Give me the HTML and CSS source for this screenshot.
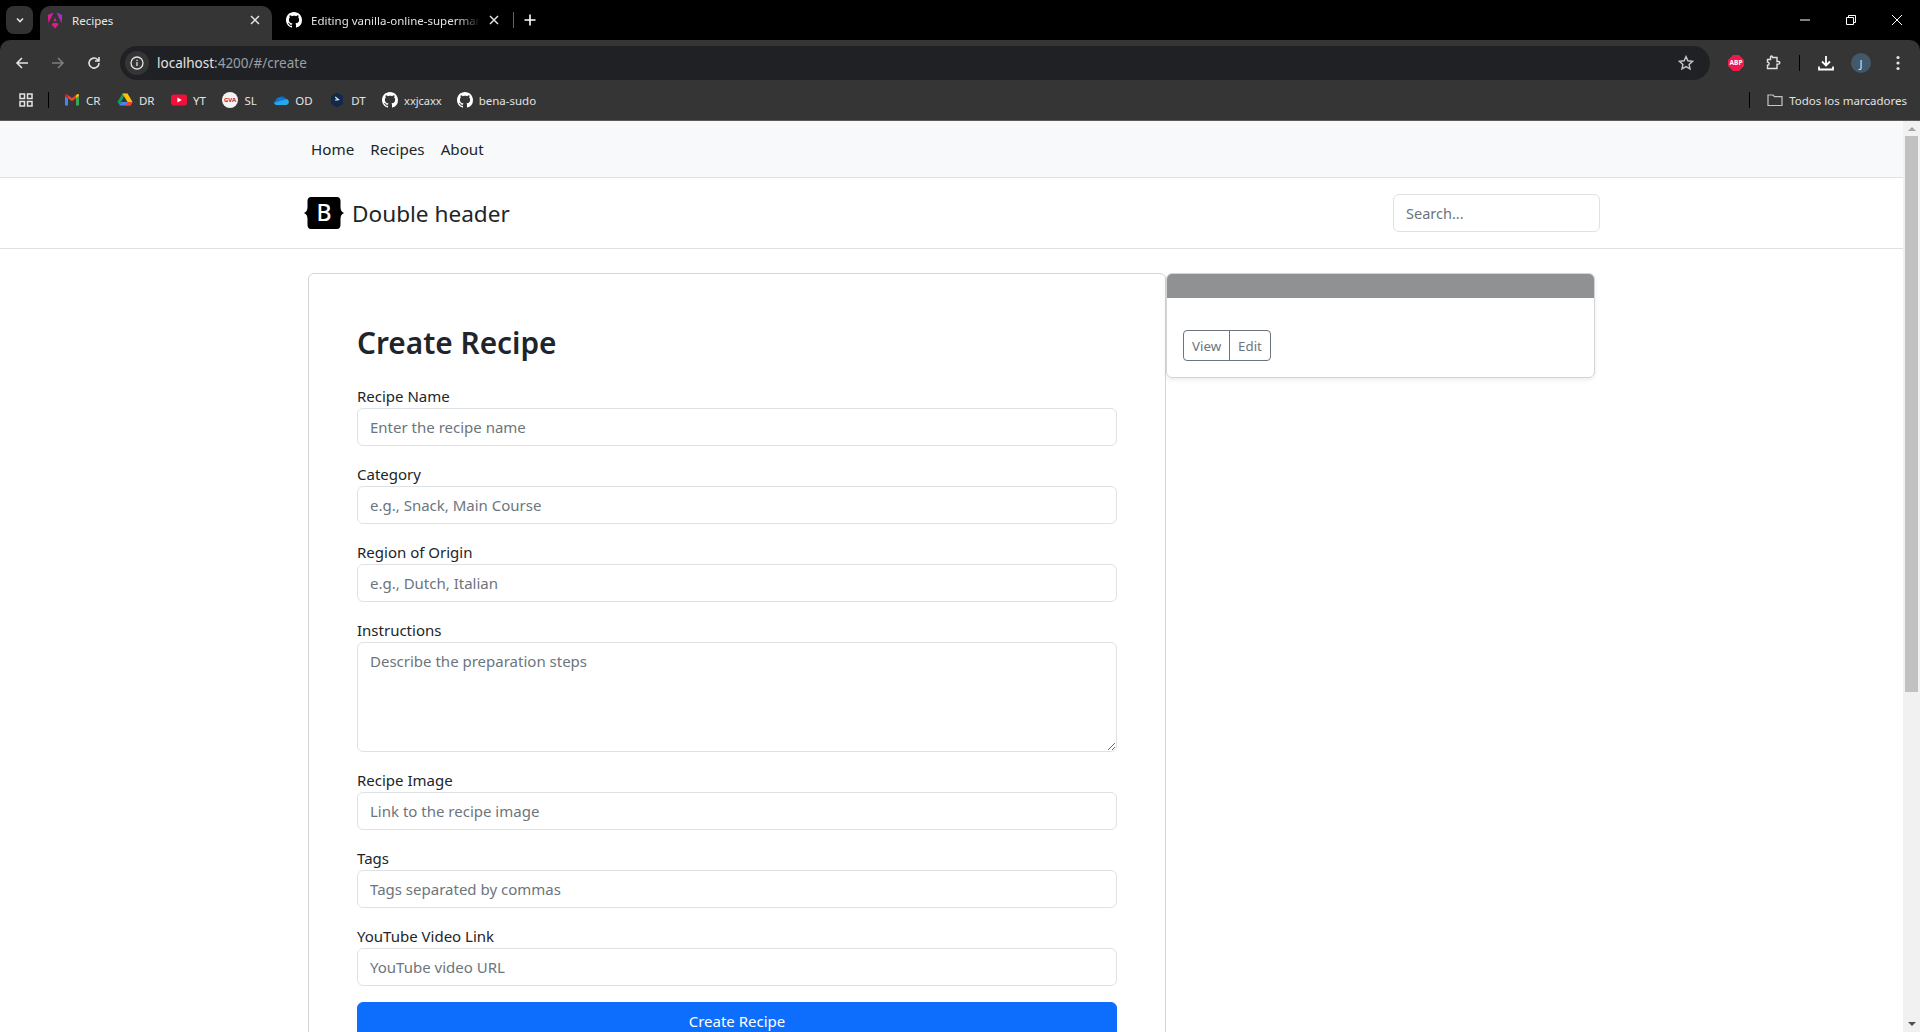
FILE: index.html
```html
<!DOCTYPE html>
<html lang="en">
<head>
    <meta charset="UTF-8">
    <meta name="viewport" content="width=device-width, initial-scale=1.0">
    <title>Recipes</title>
    <link rel="stylesheet" href="styles.css">
</head>
<body>
    <svg class="defs" width="0" height="0">
        <symbol id="gh" viewBox="0 0 16 16">
            <path fill="currentColor" d="M8 0C3.58 0 0 3.58 0 8c0 3.54 2.29 6.53 5.47 7.59.4.07.55-.17.55-.38 0-.19-.01-.82-.01-1.49-2.01.37-2.53-.49-2.69-.94-.09-.23-.48-.94-.82-1.13-.28-.15-.68-.52-.01-.53.63-.01 1.08.58 1.23.82.72 1.21 1.87.87 2.33.66.07-.52.28-.87.51-1.07-1.78-.2-3.64-.89-3.64-3.95 0-.87.31-1.59.82-2.15-.08-.2-.36-1.02.08-2.12 0 0 .67-.21 2.2.82.64-.18 1.32-.27 2-.27.68 0 1.36.09 2 .27 1.53-1.04 2.2-.82 2.2-.82.44 1.1.16 1.92.08 2.12.51.56.82 1.27.82 2.15 0 3.07-1.87 3.75-3.65 3.95.29.25.54.73.54 1.48 0 1.07-.01 1.93-.01 2.2 0 .21.15.46.55.38A8.013 8.013 0 0016 8c0-4.42-3.58-8-8-8z"/>
        </symbol>
        <symbol id="x" viewBox="0 0 10 10">
            <path d="M1 1l8 8M9 1l-8 8" stroke="currentColor" stroke-width="1.5" fill="none"/>
        </symbol>
    </svg>

    <!-- browser frame -->
    <div class="chrome">
        <div class="tabstrip">
            <div class="tab-menu">
                <svg width="10" height="10" viewBox="0 0 10 10"><path d="M2 3.5l3 3 3-3" stroke="#e3e3e3" stroke-width="1.6" fill="none"/></svg>
            </div>
            <div class="tab tab-active">
                <svg class="tab-icon" width="16" height="17" viewBox="0 0 16 17">
                    <defs>
                        <linearGradient id="ng" x1="0" y1="1" x2="1" y2="0">
                            <stop offset="0" stop-color="#f0106a"/>
                            <stop offset="0.55" stop-color="#d81fa0"/>
                            <stop offset="1" stop-color="#7b3fe0"/>
                        </linearGradient>
                    </defs>
                    <path fill="url(#ng)" d="M9.6.6l4.900 10.600L15.200 3zM6.400.6L.8 3l.7 8.200zM8 5.400l-1.600 3.800h3.200zM5.600 11l-.9 2.100L8 16.400l3.300-3.300-.9-2.100z"/>
                </svg>
                <span class="tab-title">Recipes</span>
                <svg class="tab-close" width="10" height="10"><use href="#x"/></svg>
            </div>
            <div class="tab">
                <svg class="tab-icon" width="16" height="16"><use href="#gh"/></svg>
                <span class="tab-title tab-fade">Editing vanilla-online-supermar</span>
                <svg class="tab-close" width="10" height="10"><use href="#x"/></svg>
            </div>
            <span class="tab-sep"></span>
            <svg class="new-tab" width="12" height="12" viewBox="0 0 12 12"><path d="M6 .5v11M.5 6h11" stroke="#fff" stroke-width="1.6"/></svg>
            <div class="win-controls">
                <svg width="10" height="10" viewBox="0 0 10 10"><path d="M0 5h10" stroke="#fff"/></svg>
                <svg width="10" height="10" viewBox="0 0 10 10"><path d="M.5 2.500h7v7h-7zM2.500 2.500V.5h7v7h-2" stroke="#fff" fill="none"/></svg>
                <svg width="10" height="10" viewBox="0 0 10 10"><path d="M0 0l10 10M10 0L0 10" stroke="#fff"/></svg>
            </div>
        </div>

        <div class="toolbar">
            <svg class="tool" width="14" height="14" viewBox="0 0 14 14"><path d="M13 7H2M7 2L2 7l5 5" stroke="#e3e3e3" stroke-width="1.6" fill="none"/></svg>
            <svg class="tool" width="14" height="14" viewBox="0 0 14 14"><path d="M1 7h11M7 2l5 5-5 5" stroke="#7d7d7d" stroke-width="1.6" fill="none"/></svg>
            <svg class="tool" width="14" height="14" viewBox="0 0 14 14"><path d="M12 7a5 5 0 1 1-1.500-3.500L12 5M12 1v4H8" stroke="#e3e3e3" stroke-width="1.6" fill="none"/></svg>
            <div class="omnibox">
                <span class="site-info">
                    <svg width="14" height="14" viewBox="0 0 14 14"><circle cx="7" cy="7" r="6" stroke="#e3e3e3" stroke-width="1.3" fill="none"/><path d="M7 6v4M7 3.800v1.300" stroke="#e3e3e3" stroke-width="1.3"/></svg>
                </span>
                <span class="url">localhost<span class="url-rest">:4200/#/create</span></span>
                <svg class="star" width="16" height="16" viewBox="0 0 16 16"><path d="M8 1.600l1.900 4.200 4.600.5-3.400 3.100.9 4.500-4-2.300-4 2.300.9-4.500L1.500 6.300l4.600-.5z" stroke="#c4c7c5" stroke-width="1.400" fill="none"/></svg>
            </div>
            <div class="toolbar-right">
                <svg width="16" height="16" viewBox="0 0 16 16"><path fill="#ee1a4b" d="M5 0h6l5 5v6l-5 5H5l-5-5V5z"/><text x="8" y="10.400" class="abp">ABP</text></svg>
                <svg width="16" height="16" viewBox="0 0 16 16"><path d="M1.500 5h3V2.500a1 1 0 0 1 2 0V3L11 3v4h1.500a1.300 1.300 0 0 1 0 2.600H11v4.400H1.500v-3.200a1.600 1.600 0 0 0 0-3.200z" transform="translate(1 -.5)" stroke="#e3e3e3" stroke-width="1.400" fill="none"/></svg>
                <span class="tool-sep"></span>
                <svg width="16" height="16" viewBox="0 0 16 16"><path d="M8 1v9M4 6.500L8 10.500 12 6.500M1 11.500V14.500H15V11.500" stroke="#fff" stroke-width="1.800" fill="none"/></svg>
                <span class="avatar">J</span>
                <svg width="4" height="16" viewBox="0 0 4 16"><circle cx="2" cy="2.500" r="1.600" fill="#e3e3e3"/><circle cx="2" cy="8" r="1.600" fill="#e3e3e3"/><circle cx="2" cy="13.500" r="1.600" fill="#e3e3e3"/></svg>
            </div>
        </div>

        <div class="bookmarks">
            <svg class="apps" width="14" height="14" viewBox="0 0 14 14"><path d="M1 1h4.500v4.500H1zM8.500 1H13v4.500H8.500zM1 8.500h4.500V13H1zM8.500 8.500H13V13H8.500z" stroke="#e3e3e3" stroke-width="1.500" fill="none"/></svg>
            <span class="mark-sep"></span>
            <a class="mark">
                <svg width="16" height="16" viewBox="0 0 16 16"><path fill="#4285f4" d="M1 13.500V4l3 2.300v7.200z"/><path fill="#34a853" d="M12 13.500V6.300L15 4v9.500z"/><path fill="#ea4335" d="M4 6.300V3l4 3 4-3v3.300L8 9.300z"/><path fill="#c5221f" d="M1 4l3 2.300V3L2.800 2.200C2 1.600 1 2.200 1 3.200z"/><path fill="#fbbc04" d="M15 4l-3 2.300V3l1.200-.8c.8-.6 1.800 0 1.800 1z"/></svg>
                CR
            </a>
            <a class="mark">
                <svg width="16" height="16" viewBox="0 0 16 16"><path fill="#0f9d58" d="M5.400 1.500h3.200L4 10 2.400 13 .5 10z"/><path fill="#ffc107" d="M5.400 1.500h5.200L15.500 10h-5z"/><path fill="#4285f4" d="M4 10h11.500l-1.900 3.500H2.400z"/><path fill="#ea4335" d="M10.500 10h5l-1.900 3.500H8.500z"/></svg>
                DR
            </a>
            <a class="mark">
                <svg width="16" height="16" viewBox="0 0 16 16"><rect y="2.500" width="16" height="11" rx="2.800" fill="#f0103a"/><path d="M6.400 5.500L10.800 8l-4.400 2.500z" fill="#fff"/></svg>
                YT
            </a>
            <a class="mark">
                <svg width="16" height="16" viewBox="0 0 16 16"><circle cx="8" cy="8" r="8" fill="#f2f2f2"/><text x="8" y="10" class="gva">GVA</text></svg>
                SL
            </a>
            <a class="mark">
                <svg width="16" height="16" viewBox="0 0 16 16"><path fill="#0364b8" d="M6.500 5.200a4.300 4.300 0 0 1 6.700 1.800L8 9.500z"/><path fill="#0f78d4" d="M6.500 5.200A3.600 3.600 0 0 0 3 8.200 3 3 0 0 0 1 11l6 1 5-6z"/><path fill="#28a8ea" d="M13.200 7A2.900 2.900 0 0 1 15.800 10.500c-.2 1.500-1.300 2.500-2.800 2.500H3.500A2.700 2.700 0 0 1 1 11z"/></svg>
                OD
            </a>
            <a class="mark">
                <svg width="16" height="16" viewBox="0 0 16 16"><path fill="#12294a" d="M8 .5l6 3.400v8.200l-6 3.400-6-3.400V3.900z"/><path d="M6.200 5L9.400 7.600 6.200 8.200M7 11.200h0" stroke="#dbe4ef" stroke-width="1.300" fill="none"/></svg>
                DT
            </a>
            <a class="mark mark-sm">
                <svg class="gh-mark" width="16" height="16"><use href="#gh"/></svg>
                xxjcaxx
            </a>
            <a class="mark">
                <svg class="gh-mark" width="16" height="16"><use href="#gh"/></svg>
                bena-sudo
            </a>
            <span class="mark-sep mark-sep-right"></span>
            <a class="mark all-marks">
                <svg width="16" height="16" viewBox="0 0 16 16"><path d="M1 3h5l1.500 1.600H15V13.500H1z" stroke="#c4c7c5" stroke-width="1.200" fill="none"/></svg>
                Todos los marcadores
            </a>
        </div>
    </div>

    <div class="viewport">
        <div class="page">
            <nav class="topnav">
                <a href="#">Home</a>
                <a href="#">Recipes</a>
                <a href="#">About</a>
            </nav>
            <header class="subheader">
                <a class="brand" href="#">
                    <svg class="brand-logo" width="40" height="32" viewBox="0 0 40 32">
                        <path d="M7 0h26c2.500 0 3.500 2 3.500 4v6c0 3 1 5 3.500 6-2.500 1-3.500 3-3.500 6v6c0 2-1 4-3.500 4H7c-2.500 0-3.500-2-3.500-4v-6c0-3-1-5-3.500-6 2.500-1 3.500-3 3.500-6V4c0-2 1-4 3.500-4z"/>
                        <text x="20" y="24" class="brand-b">B</text>
                    </svg>
                    <span>Double header</span>
                </a>
                <input class="search" type="search" placeholder="Search...">
            </header>

            <main class="content">
                <section class="form-card">
                    <h1>Create Recipe</h1>
                    <form>
                        <div class="field">
                            <label for="name">Recipe Name</label>
                            <input id="name" type="text" placeholder="Enter the recipe name">
                        </div>
                        <div class="field">
                            <label for="category">Category</label>
                            <input id="category" type="text" placeholder="e.g., Snack, Main Course">
                        </div>
                        <div class="field">
                            <label for="region">Region of Origin</label>
                            <input id="region" type="text" placeholder="e.g., Dutch, Italian">
                        </div>
                        <div class="field">
                            <label for="instructions">Instructions</label>
                            <textarea id="instructions" placeholder="Describe the preparation steps"></textarea>
                        </div>
                        <div class="field">
                            <label for="image">Recipe Image</label>
                            <input id="image" type="text" placeholder="Link to the recipe image">
                        </div>
                        <div class="field">
                            <label for="tags">Tags</label>
                            <input id="tags" type="text" placeholder="Tags separated by commas">
                        </div>
                        <div class="field">
                            <label for="video">YouTube Video Link</label>
                            <input id="video" type="text" placeholder="YouTube video URL">
                        </div>
                        <button class="submit" type="submit">Create Recipe</button>
                    </form>
                </section>

                <aside class="preview-card">
                    <div class="preview-img"></div>
                    <div class="preview-body">
                        <div class="btn-group">
                            <button type="button">View</button>
                            <button type="button">Edit</button>
                        </div>
                    </div>
                </aside>
            </main>
        </div>

        <div class="scrollbar">
            <span class="arrow arrow-up"></span>
            <span class="thumb"></span>
            <span class="arrow arrow-down"></span>
        </div>
    </div>
</body>
</html>
```

FILE: styles.css
```css
* {
    box-sizing: border-box;
}
html, body {
    height: 100%;
}
body {
    margin: 0;
    overflow: hidden;
    font-family: "Noto Sans", "Open Sans", sans-serif;
    font-size: 16px;
    color: #212529;
    background: #fff;
}
.defs {
    position: absolute;
}

/* browser frame */
.chrome {
    height: 121px;
    background: #000;
    color: #e3e3e3;
    font-size: 11.5px;
}
.tabstrip {
    height: 40px;
    display: flex;
    align-items: flex-end;
}
.tab-menu {
    width: 27px;
    height: 28px;
    margin: 0 7px 6px 6px;
    border-radius: 8px;
    background: #323232;
    display: flex;
    align-items: center;
    justify-content: center;
}
.tab {
    flex: none;
    width: 232px;
    height: 34px;
    padding: 0 12px 6px 7px;
    display: flex;
    align-items: center;
    border-radius: 10px 10px 0 0;
    color: #e3e3e3;
}
.tab-active {
    background: #353535;
    color: #e8e8e8;
}
.tab-active + .tab {
    width: 241px;
    padding-left: 14px;
    padding-right: 14px;
}
.tab-icon {
    flex: none;
    color: #fff;
    margin-right: 9px;
}
.tab-title {
    flex: none;
    white-space: nowrap;
}
.tab-fade {
    -webkit-mask-image: linear-gradient(to left, transparent 0, #000 22px);
    mask-image: linear-gradient(to left, transparent 0, #000 22px);
}
.tab-close {
    flex: none;
    margin-left: auto;
    color: #e3e3e3;
}
.tab-sep {
    width: 1px;
    height: 16px;
    background: #5f6368;
    margin: 0 0 12px 0;
}
.new-tab {
    margin: 0 0 14px 10px;
}
.win-controls {
    margin-left: auto;
    height: 40px;
    display: flex;
    align-items: center;
    gap: 36px;
    padding-right: 18px;
}

.toolbar {
    height: 40px;
    display: flex;
    align-items: center;
    background: #353535;
    border-radius: 10px 10px 0 0;
    padding: 6px 0 0 15px;
}
.tool {
    flex: none;
    margin-right: 22px;
}
.omnibox {
    flex: none;
    width: 1590px;
    height: 34px;
    margin-left: -3px;
    border-radius: 17px;
    background: #202124;
    display: flex;
    align-items: center;
    padding: 0 10px 0 5px;
    font-size: 13.5px;
}
.site-info {
    width: 24px;
    height: 24px;
    border-radius: 50%;
    background: #353535;
    display: flex;
    align-items: center;
    justify-content: center;
    margin-right: 8px;
}
.url {
    color: #e3e3e3;
}
.url-rest {
    color: #9aa0a6;
}
.star {
    margin-left: auto;
    margin-right: 6px;
}
.toolbar-right {
    flex: 1;
    display: flex;
    align-items: center;
    padding-left: 18px;
}
.toolbar-right > :nth-child(2) {
    margin-left: 21px;
}
.tool-sep {
    width: 1px;
    height: 16px;
    background: #000;
    margin: 0 18px 0 18px;
}
.avatar {
    width: 20px;
    height: 20px;
    border-radius: 50%;
    margin: 0 25px 0 17px;
    background: #42596b;
    color: #dfe6ec;
    font-size: 11px;
    display: flex;
    align-items: center;
    justify-content: center;
}
.abp {
    font-size: 6.5px;
    font-weight: 700;
    fill: #fff;
    text-anchor: middle;
}
.gva {
    font-size: 6px;
    font-weight: 700;
    fill: #c8102e;
    text-anchor: middle;
}

.bookmarks {
    height: 41px;
    display: flex;
    align-items: center;
    background: #353535;
    padding-left: 19px;
    border-bottom: 1px solid #5b5b5b;
}
.apps {
    flex: none;
}
.mark-sep {
    width: 1px;
    height: 16px;
    background: #000;
    margin: 0 15px 0 15px;
}
.mark {
    display: flex;
    align-items: center;
    gap: 6px;
    margin-right: 16.5px;
    color: #e3e3e3;
    white-space: nowrap;
}
.mark-sm {
    font-size: 11px;
    margin-right: 15px;
}
.gh-mark {
    color: #fff;
}
.mark-sep-right {
    margin-left: auto;
    margin-right: 17px;
}
.all-marks {
    margin-right: 13px;
}

/* page */
.viewport {
    height: calc(100vh - 121px);
    display: flex;
}
.page {
    flex: 1;
    min-width: 0;
    overflow: hidden;
}
.scrollbar {
    width: 17px;
    background: #f1f1f1;
    display: flex;
    flex-direction: column;
    align-items: center;
    padding-bottom: 6px;
}
.thumb {
    width: 13px;
    height: 556px;
    background: #c1c1c1;
    margin-top: 5px;
}
.arrow {
    width: 0;
    height: 0;
    border-left: 4px solid transparent;
    border-right: 4px solid transparent;
}
.arrow-up {
    margin-top: 6px;
    border-bottom: 4px solid #a3a3a3;
}
.arrow-down {
    margin-top: auto;
    border-top: 4px solid #505050;
}

.topnav {
    height: 57px;
    display: flex;
    align-items: center;
    gap: 16px;
    padding-left: 311px;
    background: #f8f9fa;
    border-bottom: 1px solid #dee2e6;
    font-size: 15.2px;
}
.topnav a {
    color: #212529;
    text-decoration: none;
}
.subheader {
    height: 71px;
    display: flex;
    align-items: center;
    justify-content: space-between;
    padding: 0 303px 0 304px;
    border-bottom: 1px solid #dee2e6;
}
.brand {
    display: flex;
    align-items: center;
    gap: 8px;
    color: #212529;
    font-size: 22.6px;
    text-decoration: none;
}
.brand-logo {
    overflow: visible;
}
.brand-b {
    font-size: 23px;
    font-weight: 500;
    fill: #fff;
    text-anchor: middle;
}
.search {
    width: 207px;
    height: 38px;
    padding: 6px 12px;
    font: inherit;
    font-size: 14.5px;
    border: 1px solid #dee2e6;
    border-radius: 6px;
    outline: none;
}
input::placeholder, textarea::placeholder {
    color: #6c757d;
    opacity: 1;
}

.content {
    display: flex;
    align-items: flex-start;
    padding: 24px 0 0 308px;
}
.form-card {
    width: 858px;
    padding: 48px;
    border: 1px solid #d3d4d5;
    border-radius: 6px;
}
h1 {
    margin: 0 0 22px;
    padding-top: 2px;
    font-size: 29.8px;
    font-weight: 600;
    line-height: 38px;
}
.field {
    margin-bottom: 16px;
}
.field label {
    display: block;
    line-height: 24px;
    font-size: 15px;
}
.field input, .field textarea {
    display: block;
    width: 100%;
    height: 38px;
    padding: 6px 12px;
    font: inherit;
    font-size: 15px;
    line-height: 24px;
    border: 1px solid #dee2e6;
    border-radius: 6px;
    outline: none;
}
.field textarea {
    height: 110px;
}
.submit {
    display: block;
    width: 100%;
    height: 38px;
    border: 1px solid #0d6efd;
    border-radius: 6px;
    background: #0d6efd;
    color: #fff;
    font: inherit;
    font-size: 15px;
}
.preview-card {
    width: 429px;
    height: 105px;
    border: 1px solid #d3d4d5;
    border-radius: 6px;
    overflow: hidden;
    box-shadow: 0 2px 4px rgba(0, 0, 0, .075);
}
.preview-img {
    height: 24px;
    background: #909192;
}
.preview-body {
    padding: 32px 16px 0;
}
.btn-group {
    display: flex;
}
.btn-group button {
    height: 31px;
    padding: 0 8px;
    background: #fff;
    border: 1px solid #6c757d;
    color: #6c757d;
    font: inherit;
    font-size: 13.3px;
}
.btn-group button:first-child {
    border-radius: 4px 0 0 4px;
}
.btn-group button:last-child {
    margin-left: -1px;
    border-radius: 0 4px 4px 0;
}
```
